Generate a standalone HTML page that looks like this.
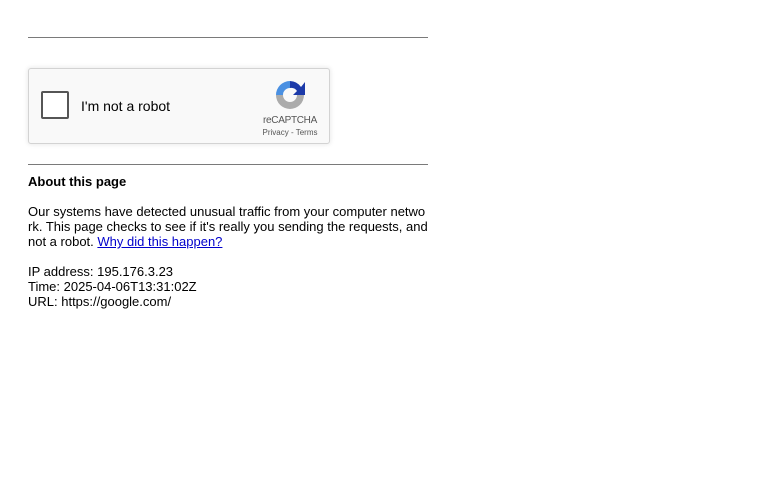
<!DOCTYPE html>
<html><head><style>
body{margin:0;font-family:"Liberation Sans",Arial,sans-serif;font-size:13px;color:#000;background:#fff;}
.hr{position:absolute;left:28px;width:400px;height:1px;background:#7a7a7a;}
.rc{position:absolute;left:28px;top:68px;width:300px;height:74px;border:1px solid #d3d3d3;border-radius:3px;background:#f9f9f9;box-shadow:0 0 4px 1px rgba(0,0,0,0.08);}
.cb{position:absolute;left:12px;top:22px;width:24px;height:24px;border:2px solid #555;border-radius:2px;background:#fff;}
.lbl{position:absolute;left:52px;top:29px;font-size:14px;color:#000;}
.rt{position:absolute;left:0;top:46px;width:100%;text-align:center;font-size:10px;color:#555;letter-spacing:-0.3px;}
.pt{position:absolute;left:0;top:59px;width:100%;text-align:center;font-size:8px;color:#555;}
.txt{position:absolute;left:28px;width:402px;line-height:15px;}
a{color:#00c;}
</style></head><body>
<div class="hr" style="top:37px"></div>
<div class="rc">
<div class="cb"></div>
<div class="lbl">I'm not a robot</div>
<div style="position:absolute;left:226px;top:0;width:70px;height:74px;">
<svg style="position:absolute;left:19px;top:10px" width="32" height="32" viewBox="0 0 32 32">
<path d="M16 2 A14 14 0 0 0 2 16 L9 16 A7 7 0 0 1 16 9 Z" fill="#4a90e2"/>
<path d="M16 2 A14 14 0 0 1 27 8 L31 3 L31 16 L19 16 L23 12 A7 7 0 0 0 16 9 Z" fill="#1c3aa9"/>
<path d="M2 16 A14 14 0 0 0 30 16 L23 16 A7 7 0 0 1 9 16 Z" fill="#ababab"/>
</svg>
<div class="rt">reCAPTCHA</div>
<div class="pt">Privacy - Terms</div>
</div>
</div>
<div class="hr" style="top:164px"></div>
<div class="txt" style="top:174px;font-weight:bold">About this page</div>
<div class="txt" style="top:204px">Our systems have detected unusual traffic from your computer netwo rk. This page checks to see if it's really you sending the requests, and not a robot. <a href="#">Why did this happen?</a></div>
<div class="txt" style="top:264px">IP address: 195.176.3.23<br>Time: 2025-04-06T13:31:02Z<br>URL: https://google.com/</div>
</body></html>
